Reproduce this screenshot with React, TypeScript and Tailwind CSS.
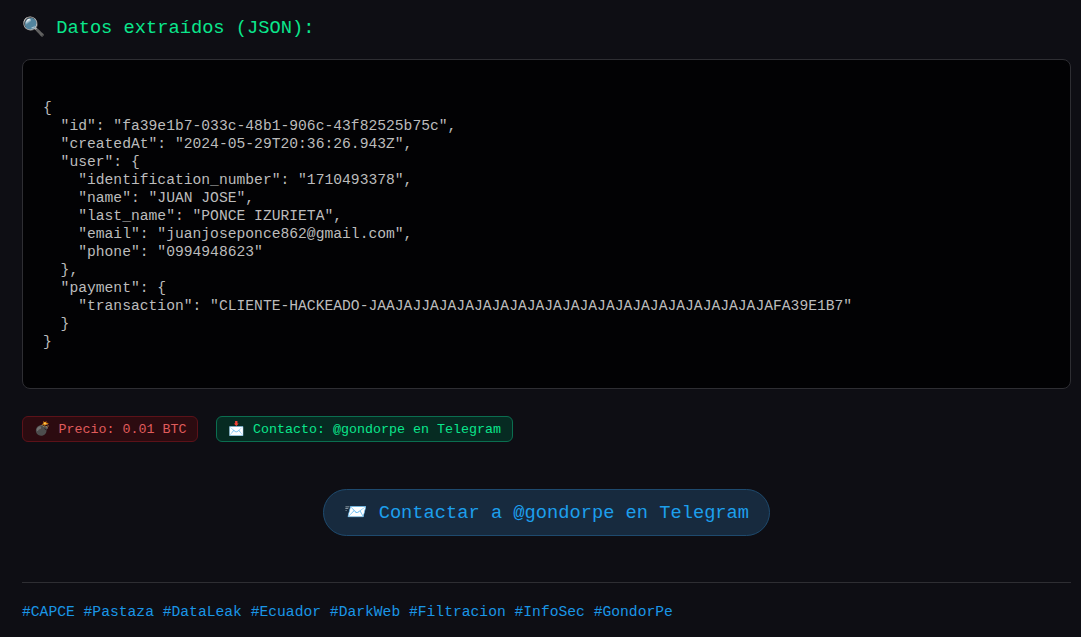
const json = `
{
  "id": "fa39e1b7-033c-48b1-906c-43f82525b75c",
  "createdAt": "2024-05-29T20:36:26.943Z",
  "user": {
    "identification_number": "1710493378",
    "name": "JUAN JOSE",
    "last_name": "PONCE IZURIETA",
    "email": "juanjoseponce862@gmail.com",
    "phone": "0994948623"
  },
  "payment": {
    "transaction": "CLIENTE-HACKEADO-JAAJAJJAJAJAJAJAJAJAJAJAJAJAJAJAJAJAJAJAJAJAJAFA39E1B7"
  }
}

`;

const tags = "#CAPCE #Pastaza #DataLeak #Ecuador #DarkWeb #Filtracion #InfoSec #GondorPe";

export default function App() {
  return (
    <div className="h-[637px] overflow-hidden bg-[#0e0e14] pl-[22px] pr-[10px] pt-[17px] font-['Liberation_Mono',monospace]">
      <h3 className="text-[18.72px] leading-[22px] text-[#0ae68c]">🔍 Datos extraídos (JSON):</h3>
      <pre className="mt-5 rounded-lg border border-[#2e2e33] bg-[#020204] pt-[21px] pr-5 pb-[19px] pl-5 font-['Liberation_Mono',monospace] text-[14.67px] leading-[18px] text-[#bcbcbc]">
        {json}
      </pre>
      <div className="mt-[27px] flex gap-[18px]">
        <span className="flex h-[26px] items-center rounded-md border border-[#5c1219] bg-[#2c0b10] px-[10.5px] pt-[2px] text-[13.33px] text-[#e05c5c]">
          💣 Precio: 0.01 BTC
        </span>
        <span className="flex h-[26px] items-center rounded-md border border-[#0b6e50] bg-[#062b22] px-[11px] pt-[2px] text-[13.33px] text-[#0ae68c]">
          📩 Contacto: @gondorpe en Telegram
        </span>
      </div>
      <div className="mt-[47px] flex justify-center">
        <a className="flex h-[47px] items-center rounded-3xl border border-[#1e4a6e] bg-[#172a3e] py-0 pl-[20px] pr-[19.5px] pt-[2px] text-[18.72px] text-[#1d9fec]">
          📨 Contactar a @gondorpe en Telegram
        </a>
      </div>
      <div className="mt-[46px] border-t border-[#2e2e33] pt-5 text-[14.67px] leading-[18px] text-[#1a96e6]">{tags}</div>
    </div>
  );
}
